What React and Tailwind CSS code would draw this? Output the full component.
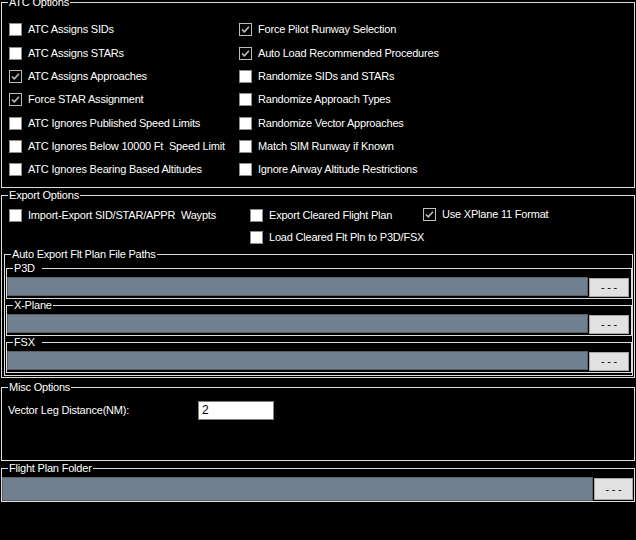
import React from "react"

const atcLeft = [
  ["ATC Assigns SIDs", false],
  ["ATC Assigns STARs", false],
  ["ATC Assigns Approaches", true],
  ["Force STAR Assignment", true],
  ["ATC Ignores Published Speed Limits", false],
  ["ATC Ignores Below 10000 Ft  Speed Limit", false],
  ["ATC Ignores Bearing Based Altitudes", false],
]

const atcRight = [
  ["Force Pilot Runway Selection", true],
  ["Auto Load Recommended Procedures", true],
  ["Randomize SIDs and STARs", false],
  ["Randomize Approach Types", false],
  ["Randomize Vector Approaches", false],
  ["Match SIM Runway if Known", false],
  ["Ignore Airway Altitude Restrictions", false],
]

// rows 2 and 5 sit one pixel lower, like the original form
const rowClass = (i) => (i === 1 || i === 4 ? "h-[23px] mt-[1px]" : "h-[23px]")

function Box({ checked }) {
  if (checked) {
    return (
      <span className="w-[13px] h-[13px] shrink-0 border border-[#bdbdbd] bg-black flex items-center justify-center">
        <svg width="11" height="11" viewBox="0 0 11 11">
          <path d="M2 5.5 L4.3 7.8 L9 2.8" fill="none" stroke="#bdbdbd" strokeWidth="1.6" />
        </svg>
      </span>
    )
  }
  return <span className="w-[13px] h-[13px] shrink-0 border border-[#8c8c8c] bg-white" />
}

function Check({ label, checked, className = "" }) {
  return (
    <div className={`flex items-center gap-[6px] whitespace-pre ${className}`}>
      <Box checked={checked} />
      <span>{label}</span>
    </div>
  )
}

function Group({ label, className = "", legendClass = "", children }) {
  return (
    <fieldset className={`border border-[#dcdcdc] min-w-0 ${className}`}>
      <legend className={`ml-[6px] pl-[1px] pr-[1px] text-[11px] leading-[13px] ${legendClass}`}>{label}</legend>
      {children}
    </fieldset>
  )
}

function PathRow() {
  return (
    <div className="flex items-start pt-[2px] pb-[1px] pr-[2px]">
      <div className="flex-1 h-[19px] bg-[#708090] border border-[#5a5f66]" />
      <button className="mt-[1px] ml-[1px] w-[40px] h-[19px] bg-[#e1e1e1] border border-[#a8a8a8] text-black text-[11px] leading-[15px]">
        - - -
      </button>
    </div>
  )
}

export default function App() {
  return (
    <div
      className="h-[540px] w-[636px] bg-black text-white text-[11px] leading-[13px] tracking-[-0.2px] overflow-hidden"
      style={{ fontFamily: '"Liberation Sans", Arial, sans-serif' }}
    >
      <Group label="ATC Options" className="ml-[1px] mr-[1px] mt-[-4px] pt-[9px] pb-[6px]">
        <div className="flex pl-[7px]">
          <div className="w-[230px]">
            {atcLeft.map(([l, c], i) => (
              <Check key={l} label={l} checked={c} className={rowClass(i)} />
            ))}
          </div>
          <div className="flex-1">
            {atcRight.map(([l, c], i) => (
              <Check key={l} label={l} checked={c} className={rowClass(i)} />
            ))}
          </div>
        </div>
      </Group>

      <Group label="Export Options" className="ml-[1px] mr-[1px] mt-[1px] pb-[1px]">
        <div className="grid grid-cols-[241px_173px_1fr] pl-[7px] pt-[2px]">
          <Check label="Import-Export SID/STAR/APPR  Waypts" checked={false} className="h-[22px]" />
          <Check label="Export Cleared Flight Plan" checked={false} className="h-[22px]" />
          <Check label="Use XPlane 11 Format" checked={true} className="h-[22px] -mt-[1px]" />
          <div />
          <Check label="Load Cleared Flt Pln to P3D/FSX" checked={false} className="h-[22px]" />
        </div>

        <Group label="Auto Export Flt Plan File Paths" className="ml-[2px] mr-[1px] pb-[2px]">
          <Group label="P3D" legendClass="pr-[7px]" className="ml-[1px] mt-[1px]">
            <PathRow />
          </Group>
          <Group label="X-Plane" className="ml-[1px]">
            <PathRow />
          </Group>
          <Group label="FSX" legendClass="pr-[7px]" className="ml-[1px]">
            <PathRow />
          </Group>
        </Group>
      </Group>

      <Group label="Misc Options" className="ml-[1px] mr-[1px] mt-[3px] h-[80px]">
        <div className="flex items-center pl-[6px] pt-[7px]">
          <span className="w-[190px]">Vector Leg Distance(NM):</span>
          <div className="w-[76px] h-[19px] bg-white border border-[#808080] text-black text-[12px] leading-[17px] tracking-normal pl-[3px]">
            2
          </div>
        </div>
      </Group>

      <Group label="Flight Plan Folder" className="ml-[1px] mr-[1px] mt-[1px]">
        <div className="flex items-start pt-[2px] pr-[1px]">
          <div className="w-[591px] h-[24px] bg-[#708090] border border-[#5a5f66]" />
          <button className="mt-[1px] ml-[1px] w-[39px] h-[22px] bg-[#e1e1e1] border border-[#a8a8a8] text-black text-[11px] leading-[18px]">
            - - -
          </button>
        </div>
      </Group>
    </div>
  )
}
